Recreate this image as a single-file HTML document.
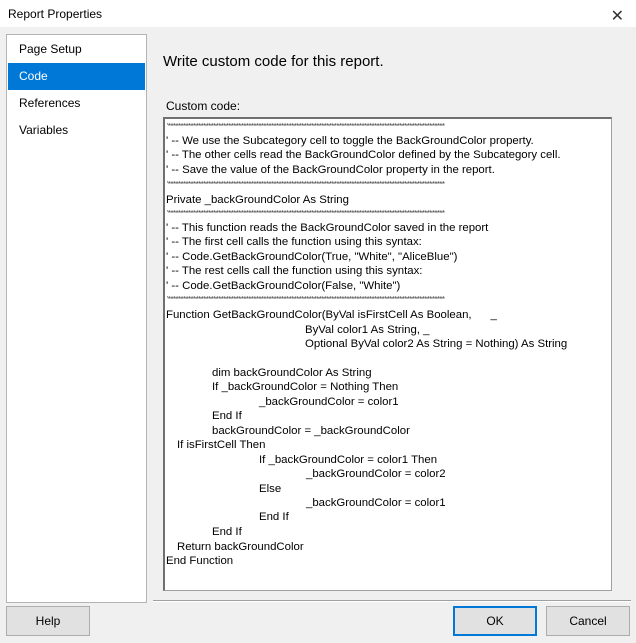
<!DOCTYPE html>
<html><head><meta charset="utf-8"><style>
*{margin:0;padding:0;box-sizing:border-box}
body{width:636px;height:643px;background:#f0f0f0;font-family:"Liberation Sans",sans-serif;position:relative;overflow:hidden;color:#000}
.title{position:absolute;left:0;top:0;width:636px;height:27px;background:#fff;font-size:12px;line-height:28px;padding-left:8px}
.x{position:absolute;right:12px;top:3px;font-size:16px;color:#333}
.list{position:absolute;left:6px;top:34px;width:141px;height:569px;background:#fff;border:1px solid #b4b4b4}
.it{position:absolute;left:1px;width:137px;height:27px;font-size:12px;line-height:27px;padding-left:11px}
.sel{background:#0078d7;color:#fff}
.h{position:absolute;left:163px;top:53px;font-size:15px}
.lbl{position:absolute;left:166px;top:99px;font-size:12px}
.ta{position:absolute;left:163px;top:117px;width:449px;height:474px;background:#fff;border:1px solid #a0a0a0;border-left:2px solid #707070;border-top:2px solid #707070}
.l{position:absolute;font-size:11.4px;white-space:pre;line-height:14px}
.s{position:absolute;left:167px;width:353px;height:6px;overflow:hidden;font-size:8px;line-height:8px;letter-spacing:-0.6px;color:#444;white-space:nowrap}
.sep{position:absolute;left:153px;top:600px;width:478px;height:2px;border-top:1px solid #a0a0a0;border-bottom:1px solid #fff}
.btn{position:absolute;top:606px;height:30px;background:#e1e1e1;border:1px solid #adadad;font-size:12px;text-align:center;line-height:28px}
.ok{border:2px solid #0078d7;line-height:26px}
</style></head><body>
<div class="title">Report Properties<span class="x">✕</span></div>
<div class="list">
<div class="it" style="top:1px">Page Setup</div>
<div class="it sel" style="top:28px">Code</div>
<div class="it" style="top:55px">References</div>
<div class="it" style="top:82px">Variables</div>
</div>
<div class="h">Write custom code for this report.</div>
<div class="lbl">Custom code:</div>
<div class="ta"></div>
<div class="s" style="top:123px">'**************************************************************************************************************</div>
<div class="l" style="left:166px;top:134px">' -- We use the Subcategory cell to toggle the BackGroundColor property.</div>
<div class="l" style="left:166px;top:148px">' -- The other cells read the BackGroundColor defined by the Subcategory cell.</div>
<div class="l" style="left:166px;top:163px">' -- Save the value of the BackGroundColor property in the report.</div>
<div class="s" style="top:181px">'**************************************************************************************************************</div>
<div class="l" style="left:166px;top:193px">Private _backGroundColor As String</div>
<div class="s" style="top:210px">'**************************************************************************************************************</div>
<div class="l" style="left:166px;top:221px">' -- This function reads the BackGroundColor saved in the report</div>
<div class="l" style="left:166px;top:235px">' -- The first cell calls the function using this syntax:</div>
<div class="l" style="left:166px;top:250px">' -- Code.GetBackGroundColor(True, "White", "AliceBlue")</div>
<div class="l" style="left:166px;top:264px">' -- The rest cells call the function using this syntax:</div>
<div class="l" style="left:166px;top:279px">' -- Code.GetBackGroundColor(False, "White")</div>
<div class="s" style="top:296px">'**************************************************************************************************************</div>
<div class="l" style="left:166px;top:308px">Function GetBackGroundColor(ByVal isFirstCell As Boolean,      _</div>
<div class="l" style="left:305px;top:323px">ByVal color1 As String, _</div>
<div class="l" style="left:305px;top:337px">Optional ByVal color2 As String = Nothing) As String</div>
<div class="l" style="left:212px;top:366px">dim backGroundColor As String</div>
<div class="l" style="left:212px;top:380px">If _backGroundColor = Nothing Then</div>
<div class="l" style="left:259px;top:395px">_backGroundColor = color1</div>
<div class="l" style="left:212px;top:409px">End If</div>
<div class="l" style="left:212px;top:424px">backGroundColor = _backGroundColor</div>
<div class="l" style="left:177px;top:438px">If isFirstCell Then</div>
<div class="l" style="left:259px;top:453px">If _backGroundColor = color1 Then</div>
<div class="l" style="left:306px;top:467px">_backGroundColor = color2</div>
<div class="l" style="left:259px;top:482px">Else</div>
<div class="l" style="left:306px;top:496px">_backGroundColor = color1</div>
<div class="l" style="left:259px;top:510px">End If</div>
<div class="l" style="left:212px;top:525px">End If</div>
<div class="l" style="left:177px;top:540px">Return backGroundColor</div>
<div class="l" style="left:166px;top:554px">End Function</div>
<div class="sep"></div>
<div class="btn" style="left:6px;width:84px">Help</div>
<div class="btn ok" style="left:453px;width:84px">OK</div>
<div class="btn" style="left:546px;width:84px">Cancel</div>
</body></html>
